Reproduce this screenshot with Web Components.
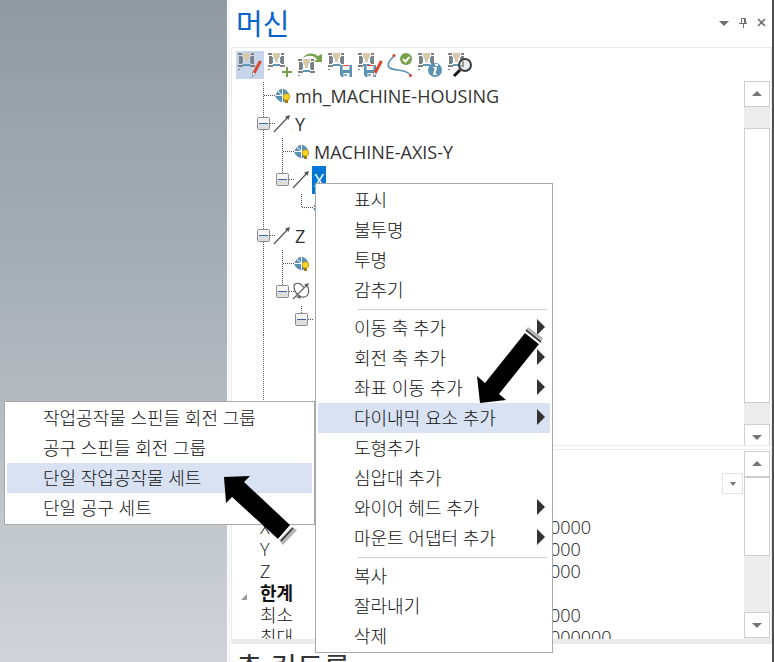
<!DOCTYPE html>
<html lang="ko">
<head>
<meta charset="utf-8">
<title>머신</title>
<style>
  html, body { height: 100%; }
  body {
    margin: 0;
    overflow: hidden;
    color: #333;
    font-family: "Open Sans", "Noto Sans CJK KR", sans-serif;
    font-size: 18px;
  }
</style>
</head>
<body>
<machine-app></machine-app>

<script>
// shared machine drawing used by most of the toolbar icons
const MACHINE = `
  <path fill="#7f7f7f" d="M0 0h4v2H0zM1 3h3v8H1zM0 12h5v2H0zM13 0h3v2h-3zM13 3h3v8h-3zM12 12h5v2h-5zM0 16h2v1H0z"/>
  <path fill="#5f97b8" d="M4 4h1v6H4zM12 4h1v6h-1zM5 11h7v2H5z"/>
  <path fill="#d6c8a8" d="M5 0h7v4h-1v2h-1v3H7V6H6V4H5z"/>`;
const PENCIL = `
  <path stroke="#d9492f" stroke-width="3" d="M22.500 8L16 20"/>
  <path fill="#fff" stroke="#777" stroke-width=".6" d="M14.500 19l3 1.500-3 3.500z"/>`;
const FLOPPY = `
  <path fill="#5c93b3" d="M12 12h12v12H14l-2-2z"/>
  <path fill="#eef3f6" d="M14.500 12h7v5h-7zM15.500 20h6v4h-6z"/>
  <path fill="#d9492f" d="M15 12h6v1h-6z"/><path fill="#5c93b3" d="M16.500 21h2v2h-2z"/>`;

const ICONS = {
  edit: MACHINE + PENCIL,
  add: MACHINE + '<path stroke="#76a04c" stroke-width="2" d="M19 14v10M14 19h10"/>',
  load: `<g transform="translate(0 6)">${MACHINE}</g>
    <path fill="#76a04c" d="M5 5C8 0 14-1 20 3l4-2v8h-8l3-3C15 2 10 2 5 5z"/>`,
  save: MACHINE + FLOPPY,
  saveas: MACHINE + '<g transform="translate(-6)">' + FLOPPY + '</g><g transform="translate(1)">' + PENCIL + '</g>',
  verify: `<path fill="none" stroke="#5c93b3" stroke-width="1.600" d="M6 3C1 8-2 12 2 15c4 3 17 1 20 7"/>
    <circle cx="6" cy="2.500" r="1.600" fill="#d9492f"/><circle cx="22.500" cy="22.500" r="1.600" fill="#d9492f"/>
    <circle cx="18" cy="6" r="6" fill="#76a04c"/><path fill="none" stroke="#fff" stroke-width="2" d="M15 6l2.500 2.500L21.500 4"/>`,
  info: MACHINE + `<circle cx="17" cy="17" r="7" fill="#5c93b3"/>
    <path fill="#fff" d="M17 11h3v2h-3zM15 14h4l-1.500 7h1.500v1h-4l1.500-7H15z"/>`,
  find: MACHINE + `<circle cx="17" cy="12" r="6" fill="#e9edef" stroke="#3d3d3d" stroke-width="2"/>
    <path fill="#9a9a9a" d="M12 12h4v2h-4zM14 8h2v4h-2z"/><path stroke="#111" stroke-width="3" d="M12 17l-6 6"/>`,
};

const ROW_ICONS = {
  part: `<path fill="#5a91b2" d="M-1 14C1 9 4 7 6.500 6.500 9 7 12 9 14 14c-2 4-5 6-7.500 6.500C4 20 1 18-1 14z"/>
    <path stroke="#fff" d="M6.500 6v15M-1 13.500h15M2 9l9 10"/>
    <circle cx="10.500" cy="15" r="3.300" fill="#fbd324" stroke="#b8890c" stroke-width=".7"/>
    <path fill="#a5790a" d="M9 18h3v3H9z"/>`,
  linear: `<path stroke="#555" stroke-width="1.200" d="M-2 22L12 7"/><path fill="#555" d="M14 5l-1.500 5-3.500-3.500z"/>`,
  rotary: `<path fill="none" stroke="#666" stroke-width="1.200" d="M-2 21L12 7M9 10C5 3-2 5-1 9c0 5 4 9 8 10 5 1 8-3 6-10"/>
    <path fill="#666" d="M14 5l-1.500 5-3.500-3.500zM5 17l1 4-5-2z"/>`,
};

class MachineApp extends HTMLElement {
  constructor() {
    super();
    this.attachShadow({ mode: 'open' }).innerHTML = `
      <style>
        :host {
          display: flex;
          height: 100%;
          box-sizing: border-box;
          border-right: 2px solid #505050;
          background: #fff;
        }
        .viewport {
          flex: 0 0 227px;
          background: linear-gradient(#9199a3, #a8b0b8 45%, #c3c8cc 80%, #d0d3d8);
        }
        dock-panel { flex: 1; min-width: 0; }
        .main { position: absolute; left: 315px; top: 183px; width: 238px; }
        .sub { position: absolute; left: 4px; top: 401px; width: 311px; }
        .marks { position: absolute; left: 0; top: 0; pointer-events: none; }
      </style>
      <div class="viewport"></div>
      <dock-panel heading="머신" next="축 컨트롤">
        <machine-tree></machine-tree>
        <property-grid slot="properties"></property-grid>
      </dock-panel>
      <popup-menu class="main">
        <menu-entry>표시</menu-entry>
        <menu-entry>불투명</menu-entry>
        <menu-entry>투명</menu-entry>
        <menu-entry>감추기</menu-entry>
        <hr>
        <menu-entry more>이동 축 추가</menu-entry>
        <menu-entry more>회전 축 추가</menu-entry>
        <menu-entry more>좌표 이동 추가</menu-entry>
        <menu-entry more active>다이내믹 요소 추가</menu-entry>
        <menu-entry>도형추가</menu-entry>
        <menu-entry>심압대 추가</menu-entry>
        <menu-entry more>와이어 헤드 추가</menu-entry>
        <menu-entry more>마운트 어댑터 추가</menu-entry>
        <hr>
        <menu-entry>복사</menu-entry>
        <menu-entry>잘라내기</menu-entry>
        <menu-entry>삭제</menu-entry>
      </popup-menu>
      <popup-menu class="sub">
        <menu-entry>작업공작물 스핀들 회전 그룹</menu-entry>
        <menu-entry>공구 스핀들 회전 그룹</menu-entry>
        <menu-entry active>단일 작업공작물 세트</menu-entry>
        <menu-entry>단일 공구 세트</menu-entry>
      </popup-menu>
      <svg class="marks" width="560" height="560" aria-hidden="true">
        <path fill="#b5b5b5" d="M525 331l3-4 15 11-3 5zM292 527l5 3-14 15-4-5z"/>
        <path d="M480 403l-3-27 8 7 40-50 14 11-40 50 7 6zM224 477l26-1-6 6 46 43-12 14-46-42-6 6z"/>
        <path stroke="#fff" stroke-width="1.500" d="M525 332l15 12M291 526l-13 14"/>
        <path stroke="#222" stroke-width="1.200" d="M526 330l15 12M293 528l-12 13"/>
      </svg>`;
  }
}

class DockPanel extends HTMLElement {
  constructor() {
    super();
    this.attachShadow({ mode: 'open' }).innerHTML = `
      <style>
        :host {
          display: flex;
          flex-direction: column;
          padding-left: 4px;
          overflow: hidden;
          background: linear-gradient(90deg, #fff 1px, #f4f4f4 1px 3px, #fff 3px);
        }
        header {
          display: flex;
          flex: none;
          align-items: center;
          justify-content: space-between;
          height: 47px;
          padding: 0 4px 0 5px;
        }
        h1, h2 { margin: 0; font-size: 29px; font-weight: 400; }
        h1 { line-height: 46px; color: #0a64cc; }
        h2 { flex: none; padding-left: 5px; line-height: 48px; white-space: nowrap; }
        .tools { display: flex; gap: 7px; }
        .tools button { width: 12px; height: 12px; padding: 0; border: 0; background: none; }
        .tools svg { display: block; }
        section { display: flex; box-sizing: border-box; border: 1px solid #ebebeb; overflow: hidden; }
        .top { flex: 0 0 399px; flex-direction: column; }
        .body { display: flex; flex: 1; min-height: 0; }
        .body > div, .bottom > div { flex: 1; min-width: 0; overflow: hidden; }
        .bottom { flex: 0 0 195px; margin-top: 3px; border-bottom: 5px solid #ebebeb; padding-top: 1px; }
      </style>
      <header>
        <h1>${this.getAttribute('heading')}</h1>
        <div class="tools">
          <button aria-label="메뉴"><svg width="12" height="12"><path fill="#707070" d="M1 3h10L6 8z"/></svg></button>
          <button aria-label="고정"><svg width="12" height="12"><path fill="none" stroke="#707070" d="M4.500 6V.5h4V6M2 5.500h8M6.500 6v4M7.500 1v4"/></svg></button>
          <button aria-label="닫기"><svg width="12" height="12"><path stroke="#707070" stroke-width="1.600" d="M2 1l7 7M9 1L2 8"/></svg></button>
        </div>
      </header>
      <section class="top">
        <tool-bar></tool-bar>
        <div class="body">
          <div><slot></slot></div>
          <scroll-bar before="21" thumb="275" after="21"></scroll-bar>
        </div>
      </section>
      <section class="bottom">
        <div><slot name="properties"></slot></div>
        <scroll-bar before="0" thumb="79" after="56"></scroll-bar>
      </section>
      <h2>${this.getAttribute('next')}</h2>`;
  }
}

class ToolBar extends HTMLElement {
  constructor() {
    super();
    const tools = [
      ['edit', '편집'], ['add', '추가'], ['load', '불러오기'], ['save', '저장'],
      ['saveas', '다른 이름으로 저장'], ['verify', '검증'], ['info', '정보'], ['find', '찾기'],
    ];
    this.attachShadow({ mode: 'open' }).innerHTML = `
      <style>
        :host { display: flex; gap: 2px; padding: 3px 4px 2px; }
        button { width: 28px; height: 28px; padding: 2px; border: 0; background: none; }
        button[aria-pressed="true"] { background: #c7d5ec; }
        svg { display: block; overflow: visible; }
      </style>
      ${tools.map(([icon, name], i) => `
        <button aria-label="${name}" aria-pressed="${i === 0}">
          <svg width="24" height="24">${ICONS[icon]}</svg>
        </button>`).join('')}`;
  }
}

class ScrollBar extends HTMLElement {
  constructor() {
    super();
    const size = (name) => this.getAttribute(name) + 'px';
    this.attachShadow({ mode: 'open' }).innerHTML = `
      <style>
        :host { display: flex; flex-direction: column; flex: 0 0 26px; margin-right: 1px; background: #ededed; }
        button, .thumb { box-sizing: border-box; border: 1px solid #cfcfcf; background: #fff; }
        button { flex: 0 0 26px; padding: 0; }
        svg { display: block; margin: auto; }
        .thumb { flex: 0 0 ${size('thumb')}; margin: ${size('before')} 0 ${size('after')}; }
      </style>
      <button aria-label="위로"><svg width="10" height="6"><path fill="#757575" d="M5 0l5 5H0z"/></svg></button>
      <div class="thumb"></div>
      <button aria-label="아래로"><svg width="10" height="6"><path fill="#757575" d="M0 1h10L5 6z"/></svg></button>`;
  }
}

class MachineTree extends HTMLElement {
  constructor() {
    super();
    this.attachShadow({ mode: 'open' }).innerHTML = `
      <style>
        :host { display: flex; flex-direction: column; height: 100%; padding-top: 1px; }
        .rest { flex: 1; margin-left: 31px; border-left: 1px dotted #666; }
      </style>
      <tree-row cells="tee" icon="part">mh_MACHINE-HOUSING</tree-row>
      <tree-row cells="box" icon="linear">Y</tree-row>
      <tree-row cells="line tee" icon="part">MACHINE-AXIS-Y</tree-row>
      <tree-row cells="line lastbox" icon="linear" selected>X</tree-row>
      <tree-row cells="line blank end" icon="part"></tree-row>
      <tree-row cells="box" icon="linear">Z</tree-row>
      <tree-row cells="line tee" icon="part"></tree-row>
      <tree-row cells="line lastbox" icon="rotary"></tree-row>
      <tree-row cells="line blank lastbox"></tree-row>
      <div class="rest"></div>`;
  }
}

class TreeRow extends HTMLElement {
  constructor() {
    super();
    const lines = {
      blank: '',
      line: 'M6.500 0V28',
      tee: 'M6.500 0V28M7 13.500H18',
      end: 'M6.500 0V14M7 13.500H18',
      box: 'M6.500 0V28M7 13.500H18',
      lastbox: 'M6.500 0V14M7 13.500H18',
    };
    const box = `
      <rect x=".5" y="7.500" width="12" height="12" rx="1" fill="#f4f4f4" stroke="#8c8c8c"/>
      <path fill="#dedede" d="M1 14h11v5H1z"/><path stroke="#3c5fae" d="M2 13.500h9"/>`;
    const cells = this.getAttribute('cells').split(' ').map((c) => `
      <svg width="19" height="28"><path stroke="#555" stroke-dasharray="1 1" d="${lines[c]}"/>${c.endsWith('box') ? box : ''}</svg>`);
    const icon = ROW_ICONS[this.getAttribute('icon')] || '';
    this.attachShadow({ mode: 'open' }).innerHTML = `
      <style>
        :host { display: flex; height: 28px; padding-left: 25px; }
        svg { flex: none; overflow: visible; }
        span { line-height: 28px; white-space: nowrap; }
        :host([selected]) span { margin-left: -2px; padding: 0 2px; background: #0078d7; color: #fff; }
      </style>
      ${cells.join('')}
      <svg width="19" height="28" fill="none">${icon}</svg>
      <span><slot></slot></span>`;
  }
}

class PropertyGrid extends HTMLElement {
  constructor() {
    super();
    const rows = [['X', '0000'], ['Y', '000'], ['Z', '000'], ['한계', ''], ['최소', '000'], ['최대', '000000']];
    this.attachShadow({ mode: 'open' }).innerHTML = `
      <style>
        :host { display: block; }
        .pick { display: flex; justify-content: flex-end; height: 43px; padding: 22px 1px 0 0; }
        .pick button { width: 21px; height: 21px; padding: 0; border: 1px solid #e3e3e3; background: #fff; }
        .pick svg { display: block; margin: auto; }
        table { width: 100%; border-collapse: collapse; table-layout: fixed; color: #111; font-weight: 300; }
        tr { height: 22px; }
        th, td { height: 22px; padding: 0; line-height: 22px; text-align: left; font-weight: inherit; white-space: nowrap; }
        th { width: 290px; padding-left: 28px; }
        .group th { padding-left: 9px; font-weight: 700; }
        .group svg { margin-right: 13px; }
      </style>
      <div class="pick">
        <button aria-label="선택"><svg width="6" height="4"><path fill="#757575" d="M0 0h6L3 4z"/></svg></button>
      </div>
      <table>
        ${rows.map(([name, value]) => value
          ? `<tr><th scope="row">${name}</th><td>${value}</td></tr>`
          : `<tr class="group"><th scope="rowgroup"><svg width="6" height="6"><path fill="#999" d="M6 0v6H0z"/></svg>${name}</th><td></td></tr>`).join('')}
      </table>`;
  }
}

class PopupMenu extends HTMLElement {
  constructor() {
    super();
    this.attachShadow({ mode: 'open' }).innerHTML = `
      <style>
        :host {
          display: block;
          box-sizing: border-box;
          padding: 1px 2px;
          border: 1px solid #a8a8a8;
          background: #fff;
          color: #111;
          font-weight: 300;
        }
        ::slotted(hr) { height: 1px; margin: 4px 3px 3px 40px; border: 0; background: #cfcfcf; }
      </style>
      <div role="menu"><slot></slot></div>`;
  }
}

class MenuEntry extends HTMLElement {
  constructor() {
    super();
    const arrow = '<svg width="8" height="16"><path fill="#333" d="M0 0l8 8-8 8z"/></svg>';
    this.attachShadow({ mode: 'open' }).innerHTML = `
      <style>
        :host { display: block; }
        button {
          display: flex;
          align-items: center;
          justify-content: space-between;
          width: 100%;
          height: 30px;
          padding: 0 5px 2px 36px;
          border: 0;
          background: none;
          color: inherit;
          font: inherit;
          white-space: nowrap;
        }
        :host([active]) button, button:hover { background: #d8e2f2; }
      </style>
      <button role="menuitem"><span><slot></slot></span>${this.hasAttribute('more') ? arrow : ''}</button>`;
  }
}

customElements.define('menu-entry', MenuEntry);
customElements.define('popup-menu', PopupMenu);
customElements.define('property-grid', PropertyGrid);
customElements.define('tree-row', TreeRow);
customElements.define('machine-tree', MachineTree);
customElements.define('scroll-bar', ScrollBar);
customElements.define('tool-bar', ToolBar);
customElements.define('dock-panel', DockPanel);
customElements.define('machine-app', MachineApp);
</script>
</body>
</html>
